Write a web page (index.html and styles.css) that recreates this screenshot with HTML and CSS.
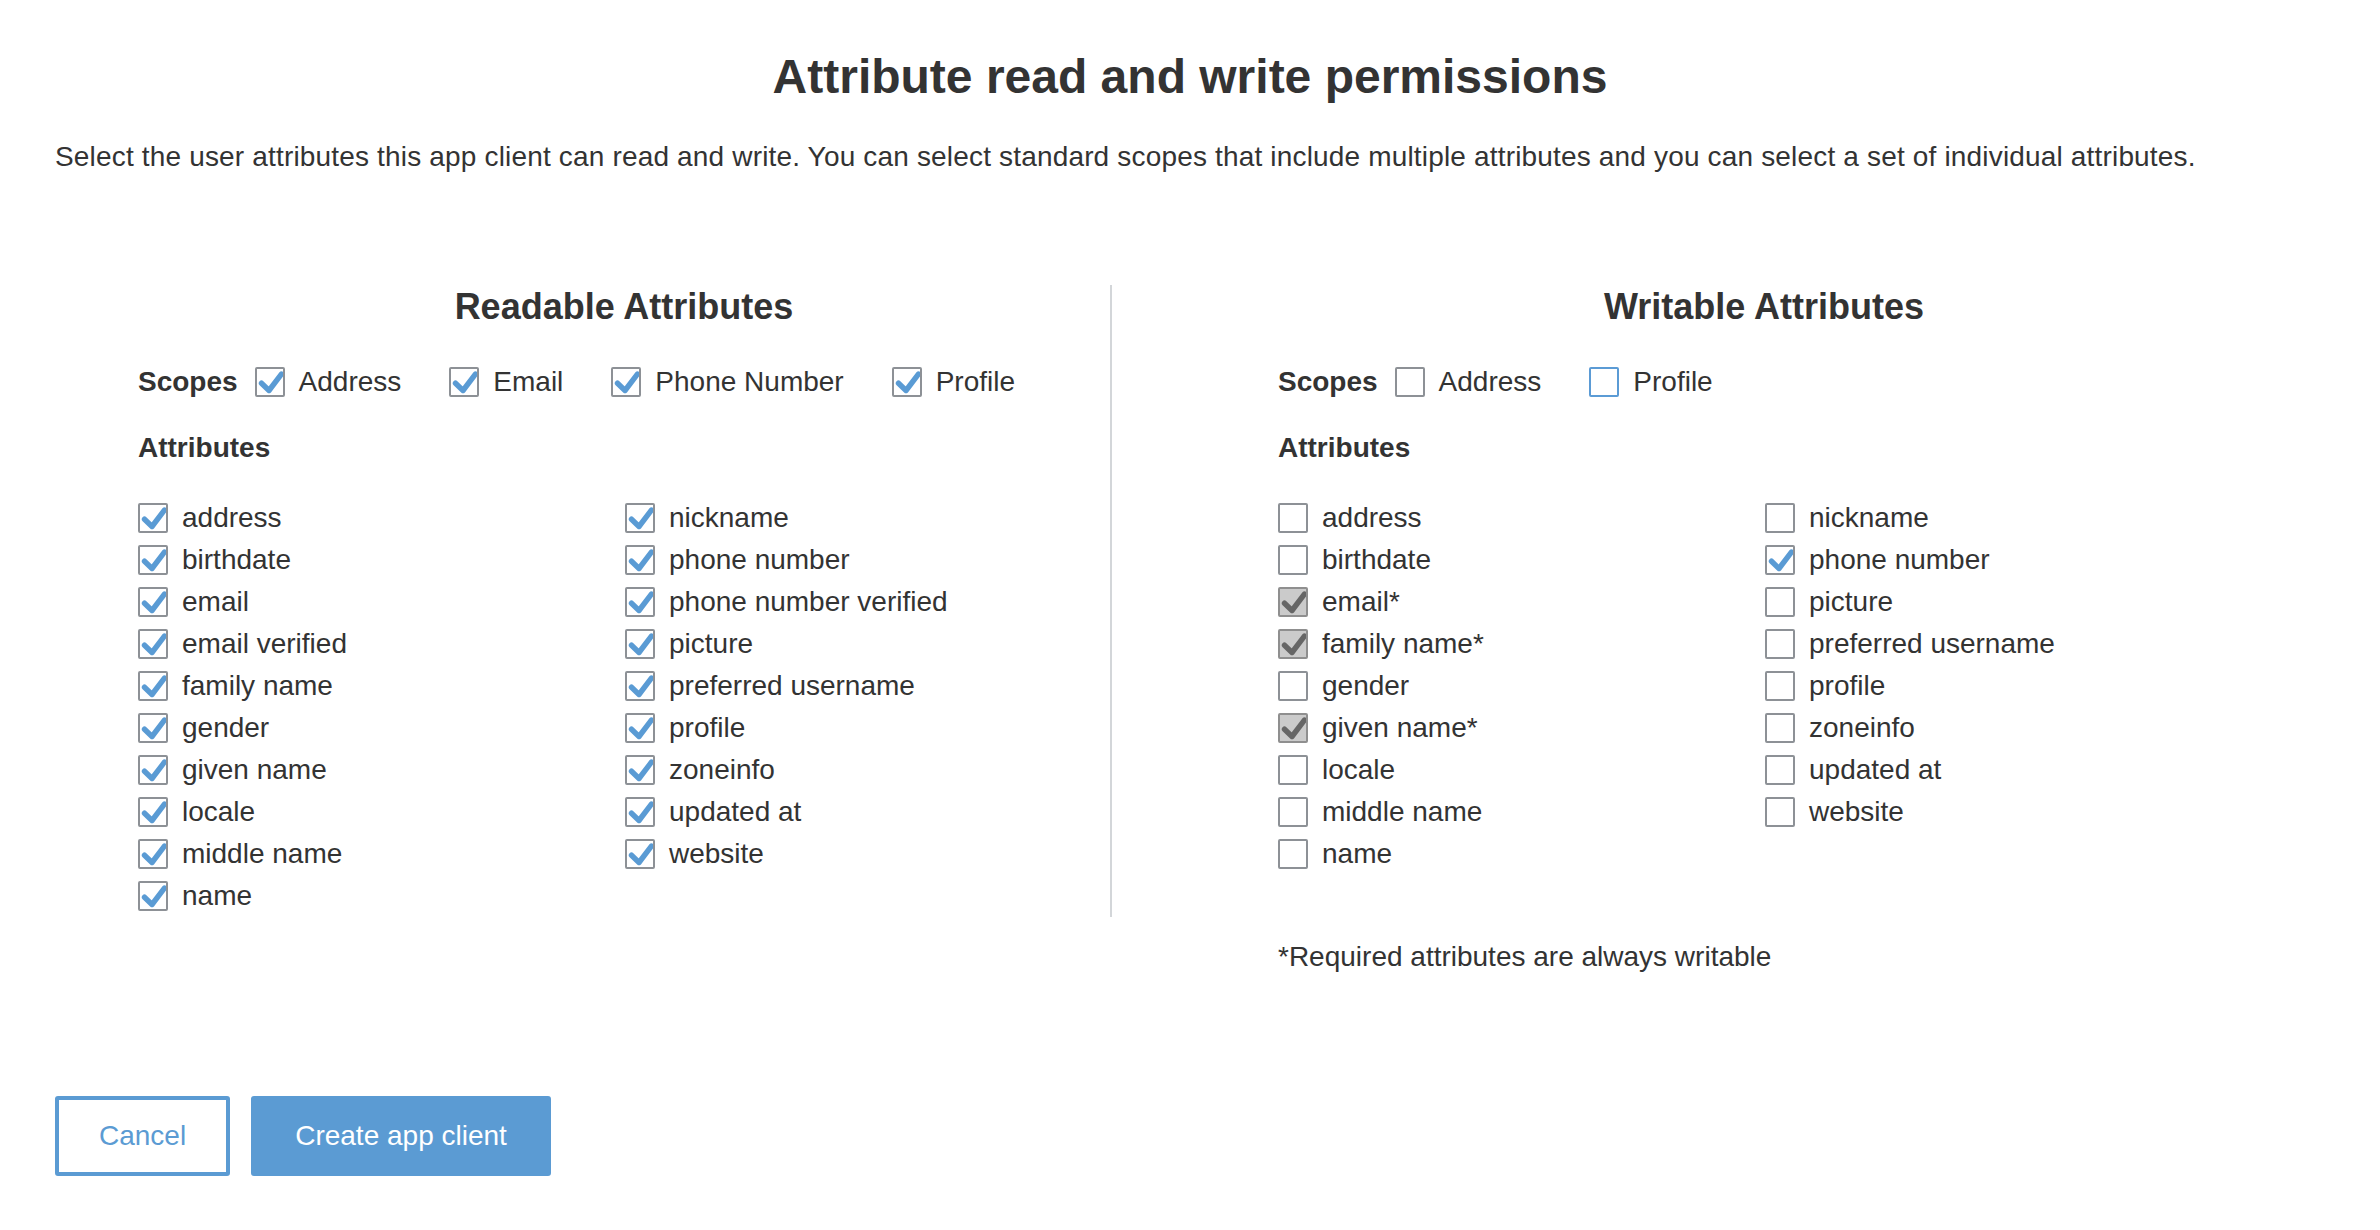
FILE: index.html
```html
<!DOCTYPE html>
<html>
<head>
<meta charset="utf-8">
<title>Attribute read and write permissions</title>
<link rel="stylesheet" href="styles.css">
</head>
<body>
<main class="page">
  <h1 class="title">Attribute read and write permissions</h1>
  <p class="desc">Select the user attributes this app client can read and write. You can select standard scopes that include multiple attributes and you can select a set of individual attributes.</p>

  <div class="columns">
    <section class="col col-left">
      <h2 class="col-title">Readable Attributes</h2>
      <div class="scopes">
        <span class="scopes-label">Scopes</span>
        <label class="item scope"><span class="cb on"><svg viewBox="0 0 26 26"><polyline points="4.5,14.2 12,21.5 24.6,5"/></svg></span>Address</label>
        <label class="item scope"><span class="cb on"><svg viewBox="0 0 26 26"><polyline points="4.5,14.2 12,21.5 24.6,5"/></svg></span>Email</label>
        <label class="item scope"><span class="cb on"><svg viewBox="0 0 26 26"><polyline points="4.5,14.2 12,21.5 24.6,5"/></svg></span>Phone Number</label>
        <label class="item scope"><span class="cb on"><svg viewBox="0 0 26 26"><polyline points="4.5,14.2 12,21.5 24.6,5"/></svg></span>Profile</label>
      </div>
      <div class="attr-label">Attributes</div>
      <div class="attr-grid">
        <ul class="attr-list">
          <li class="item"><span class="cb on"><svg viewBox="0 0 26 26"><polyline points="4.5,14.2 12,21.5 24.6,5"/></svg></span>address</li>
          <li class="item"><span class="cb on"><svg viewBox="0 0 26 26"><polyline points="4.5,14.2 12,21.5 24.6,5"/></svg></span>birthdate</li>
          <li class="item"><span class="cb on"><svg viewBox="0 0 26 26"><polyline points="4.5,14.2 12,21.5 24.6,5"/></svg></span>email</li>
          <li class="item"><span class="cb on"><svg viewBox="0 0 26 26"><polyline points="4.5,14.2 12,21.5 24.6,5"/></svg></span>email verified</li>
          <li class="item"><span class="cb on"><svg viewBox="0 0 26 26"><polyline points="4.5,14.2 12,21.5 24.6,5"/></svg></span>family name</li>
          <li class="item"><span class="cb on"><svg viewBox="0 0 26 26"><polyline points="4.5,14.2 12,21.5 24.6,5"/></svg></span>gender</li>
          <li class="item"><span class="cb on"><svg viewBox="0 0 26 26"><polyline points="4.5,14.2 12,21.5 24.6,5"/></svg></span>given name</li>
          <li class="item"><span class="cb on"><svg viewBox="0 0 26 26"><polyline points="4.5,14.2 12,21.5 24.6,5"/></svg></span>locale</li>
          <li class="item"><span class="cb on"><svg viewBox="0 0 26 26"><polyline points="4.5,14.2 12,21.5 24.6,5"/></svg></span>middle name</li>
          <li class="item"><span class="cb on"><svg viewBox="0 0 26 26"><polyline points="4.5,14.2 12,21.5 24.6,5"/></svg></span>name</li>
        </ul>
        <ul class="attr-list">
          <li class="item"><span class="cb on"><svg viewBox="0 0 26 26"><polyline points="4.5,14.2 12,21.5 24.6,5"/></svg></span>nickname</li>
          <li class="item"><span class="cb on"><svg viewBox="0 0 26 26"><polyline points="4.5,14.2 12,21.5 24.6,5"/></svg></span>phone number</li>
          <li class="item"><span class="cb on"><svg viewBox="0 0 26 26"><polyline points="4.5,14.2 12,21.5 24.6,5"/></svg></span>phone number verified</li>
          <li class="item"><span class="cb on"><svg viewBox="0 0 26 26"><polyline points="4.5,14.2 12,21.5 24.6,5"/></svg></span>picture</li>
          <li class="item"><span class="cb on"><svg viewBox="0 0 26 26"><polyline points="4.5,14.2 12,21.5 24.6,5"/></svg></span>preferred username</li>
          <li class="item"><span class="cb on"><svg viewBox="0 0 26 26"><polyline points="4.5,14.2 12,21.5 24.6,5"/></svg></span>profile</li>
          <li class="item"><span class="cb on"><svg viewBox="0 0 26 26"><polyline points="4.5,14.2 12,21.5 24.6,5"/></svg></span>zoneinfo</li>
          <li class="item"><span class="cb on"><svg viewBox="0 0 26 26"><polyline points="4.5,14.2 12,21.5 24.6,5"/></svg></span>updated at</li>
          <li class="item"><span class="cb on"><svg viewBox="0 0 26 26"><polyline points="4.5,14.2 12,21.5 24.6,5"/></svg></span>website</li>
        </ul>
      </div>
    </section>

    <section class="col col-right">
      <h2 class="col-title">Writable Attributes</h2>
      <div class="scopes">
        <span class="scopes-label">Scopes</span>
        <label class="item scope"><span class="cb"></span>Address</label>
        <label class="item scope"><span class="cb focus"></span>Profile</label>
      </div>
      <div class="attr-label">Attributes</div>
      <div class="attr-grid">
        <ul class="attr-list">
          <li class="item"><span class="cb"></span>address</li>
          <li class="item"><span class="cb"></span>birthdate</li>
          <li class="item"><span class="cb dis"><svg viewBox="0 0 26 26"><polyline points="4.5,14.2 12,21.5 24.6,5"/></svg></span>email*</li>
          <li class="item"><span class="cb dis"><svg viewBox="0 0 26 26"><polyline points="4.5,14.2 12,21.5 24.6,5"/></svg></span>family name*</li>
          <li class="item"><span class="cb"></span>gender</li>
          <li class="item"><span class="cb dis"><svg viewBox="0 0 26 26"><polyline points="4.5,14.2 12,21.5 24.6,5"/></svg></span>given name*</li>
          <li class="item"><span class="cb"></span>locale</li>
          <li class="item"><span class="cb"></span>middle name</li>
          <li class="item"><span class="cb"></span>name</li>
        </ul>
        <ul class="attr-list">
          <li class="item"><span class="cb"></span>nickname</li>
          <li class="item"><span class="cb on"><svg viewBox="0 0 26 26"><polyline points="4.5,14.2 12,21.5 24.6,5"/></svg></span>phone number</li>
          <li class="item"><span class="cb"></span>picture</li>
          <li class="item"><span class="cb"></span>preferred username</li>
          <li class="item"><span class="cb"></span>profile</li>
          <li class="item"><span class="cb"></span>zoneinfo</li>
          <li class="item"><span class="cb"></span>updated at</li>
          <li class="item"><span class="cb"></span>website</li>
        </ul>
      </div>
      <p class="note">*Required attributes are always writable</p>
    </section>
  </div>

  <div class="actions">
    <button class="btn btn-cancel">Cancel</button>
    <button class="btn btn-primary">Create app client</button>
  </div>
</main>
</body>
</html>
```

FILE: styles.css
```css
html, body {
  margin: 0;
  padding: 0;
  background: #ffffff;
}

body {
  font-family: "Liberation Sans", Arial, Helvetica, sans-serif;
  color: #333333;
  font-size: 28px;
}

.page {
  padding: 49px 55px 0 55px;
}

.title {
  margin: 0;
  font-size: 48px;
  line-height: 56px;
  font-weight: bold;
  text-align: center;
  color: #333333;
}

.desc {
  margin: 31px 0 0 0;
  font-size: 28px;
  line-height: 42px;
  letter-spacing: 0.17px;
}

.columns {
  display: flex;
  align-items: flex-start;
  margin-top: 107px;
  padding-left: 83px;
}

.col {
  width: 972px;
  flex: none;
}

.col-left {
  border-right: 2px solid #d3d6d9;
}

.col-right {
  margin-left: 166px;
}

.col-title {
  margin: 0;
  font-size: 36px;
  line-height: 44px;
  font-weight: bold;
  text-align: center;
}

.scopes {
  display: flex;
  align-items: center;
  height: 42px;
  margin-top: 32px;
}

.scopes-label {
  font-weight: bold;
  margin-right: 17px;
}

.scope {
  margin-right: 48px;
}

.attr-label {
  margin-top: 24px;
  font-weight: bold;
  line-height: 42px;
}

.attr-grid {
  display: grid;
  grid-template-columns: 487px 1fr;
  margin-top: 28px;
}

.attr-list {
  list-style: none;
  margin: 0;
  padding: 0;
}

.item {
  display: flex;
  align-items: center;
  height: 42px;
  line-height: 42px;
  white-space: nowrap;
}

.cb {
  box-sizing: border-box;
  width: 30px;
  height: 30px;
  border: 2px solid #8d9196;
  border-radius: 2px;
  background: #ffffff;
  margin-right: 14px;
  flex: none;
  display: inline-block;
}

.cb svg {
  display: block;
  width: 26px;
  height: 26px;
}

.cb polyline {
  fill: none;
  stroke: #5a9bd4;
  stroke-width: 5.4;
  stroke-linecap: round;
  stroke-linejoin: round;
}

.cb.dis {
  background: #cbcbcb;
  border-color: #8f8f8f;
}

.cb.dis polyline {
  stroke: #666666;
}

.cb.focus {
  border-color: #5b9bd5;
}

.note {
  margin: 61px 0 0 0;
  line-height: 42px;
}

.actions {
  display: flex;
  gap: 21px;
  margin-top: 118px;
}

.btn {
  box-sizing: border-box;
  height: 80px;
  border: 4px solid #5b9bd3;
  border-radius: 3px;
  padding: 0 40px;
  font-family: "Liberation Sans", Arial, Helvetica, sans-serif;
  font-size: 28px;
  cursor: pointer;
}

.btn-cancel {
  background: #ffffff;
  color: #5b9bd3;
}

.btn-primary {
  background: #5b9bd3;
  color: #ffffff;
}
```
